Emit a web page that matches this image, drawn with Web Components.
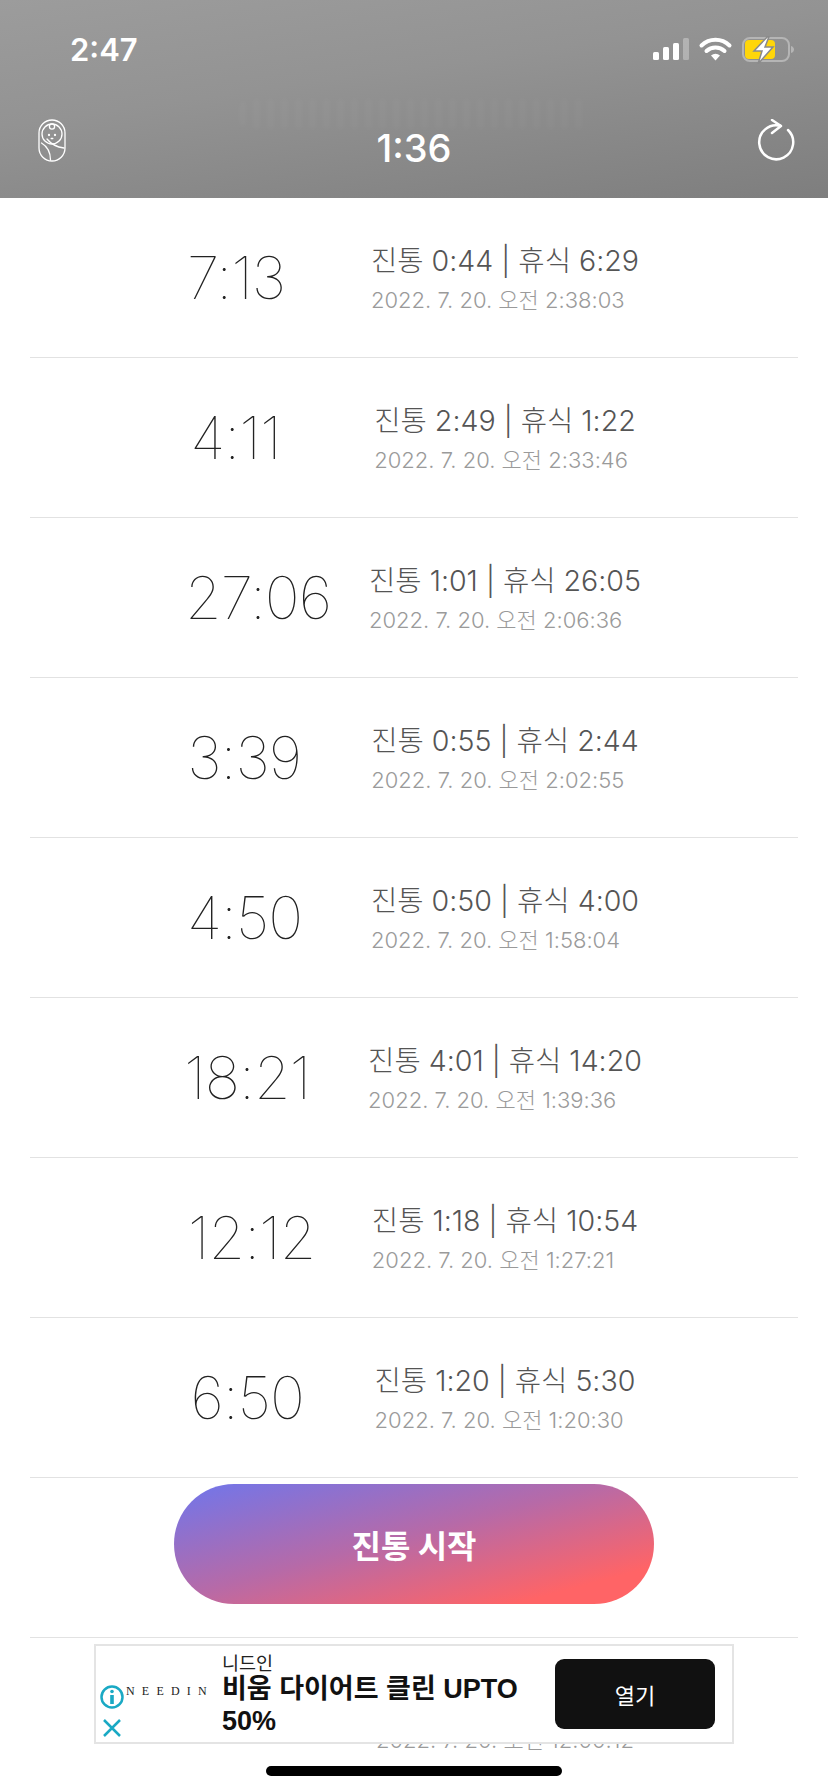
<!DOCTYPE html>
<html>
<head>
<meta charset="utf-8">
<style>
html,body{margin:0;padding:0;background:#fff;}
body{font-family:Inter,"Noto Sans CJK KR",sans-serif;}
</style>
</head>
<body>
<contraction-app>
  <contraction-row total="7:13" pain="진통 0:44 | 휴식 6:29" stamp="2022. 7. 20. 오전 2:38:03"></contraction-row>
  <contraction-row total="4:11" pain="진통 2:49 | 휴식 1:22" stamp="2022. 7. 20. 오전 2:33:46"></contraction-row>
  <contraction-row total="27:06" pain="진통 1:01 | 휴식 26:05" stamp="2022. 7. 20. 오전 2:06:36"></contraction-row>
  <contraction-row total="3:39" pain="진통 0:55 | 휴식 2:44" stamp="2022. 7. 20. 오전 2:02:55"></contraction-row>
  <contraction-row total="4:50" pain="진통 0:50 | 휴식 4:00" stamp="2022. 7. 20. 오전 1:58:04"></contraction-row>
  <contraction-row total="18:21" pain="진통 4:01 | 휴식 14:20" stamp="2022. 7. 20. 오전 1:39:36"></contraction-row>
  <contraction-row total="12:12" pain="진통 1:18 | 휴식 10:54" stamp="2022. 7. 20. 오전 1:27:21"></contraction-row>
  <contraction-row total="6:50" pain="진통 1:20 | 휴식 5:30" stamp="2022. 7. 20. 오전 1:20:30"></contraction-row>
  <contraction-row></contraction-row>
  <contraction-row stamp="2022. 7. 20. 오전 12:00:12"></contraction-row>
</contraction-app>

<script>
const headTemplate = document.createElement('template');
headTemplate.innerHTML = `
<style>
:host{display:block;height:198px;flex:none;color:#fff;position:relative;overflow:hidden;
  background:linear-gradient(172deg,#9c9c9c 0%,#939393 40%,#7e7e7e 100%);}
.status{display:flex;justify-content:space-between;align-items:center;height:36px;padding:32px 34px 0 70px;}
.clock{font:600 31px/36px Inter,sans-serif;}
.nav{display:flex;justify-content:space-between;align-items:flex-start;padding:0 33px 0 38px;margin-top:51px;}
.title{font:500 38px/44px Inter,sans-serif;margin:7px 0 0 5px;}
.ghost{position:absolute;left:240px;top:99px;width:350px;height:30px;border-radius:8px;filter:blur(2.500px);
  background:repeating-linear-gradient(90deg,rgba(255,255,255,.035) 0 5px,transparent 5px 14px);}
svg{display:block;}
</style>
<div class="ghost"></div>
<div class="status">
  <span class="clock">2:47</span>
  <svg width="142" height="28" viewBox="652 36 142 28">
    <rect x="653" y="52" width="6" height="8" rx="1.5" fill="#fff"/>
    <rect x="663" y="47" width="6" height="13" rx="1.5" fill="#fff"/>
    <rect x="673" y="43" width="6" height="17" rx="1.5" fill="#fff"/>
    <rect x="683" y="38" width="6" height="22" rx="1.5" fill="#fff" opacity=".3"/>
    <path d="M701.500 45.500a20 20 0 0 1 28 0M706.500 51a13 13 0 0 1 18 0" fill="none" stroke="#fff" stroke-width="4" stroke-linecap="round"/>
    <path d="M711 55.500a7 7 0 0 1 9 0l-4.500 5z" fill="#fff"/>
    <rect x="743" y="38" width="46" height="23" rx="7" fill="none" stroke="#b5b5b5" stroke-width="2"/>
    <path d="M791 46c2 .5 3 2 3 3.500s-1 3-3 3.500z" fill="#b5b5b5"/>
    <rect x="745" y="40" width="30" height="19" rx="4" fill="#ffd60a"/>
    <path d="M770 34l-16 17h8l-4 13 15-17h-8z" fill="#fff" stroke="#8a8a8a" stroke-width="1.500"/>
  </svg>
</div>
<div class="nav">
  <svg width="28" height="43" viewBox="0 0 28 43" fill="none" stroke="#fff" stroke-width="1.300" stroke-linecap="round">
    <rect x="1" y="1" width="26" height="41" rx="13"/>
    <circle cx="14" cy="15" r="10"/>
    <circle cx="14" cy="7.500" r="2.600"/>
    <path d="M9 20c4 5 9 8 17 9M3.500 24c5 3 9 7 9 17"/>
    <circle cx="11" cy="16" r=".5" fill="#fff"/><circle cx="17" cy="16" r=".5" fill="#fff"/>
    <path d="M13.200 19.500h1.600"/>
  </svg>
  <span class="title">1:36</span>
  <svg width="38" height="44" viewBox="0 0 38 44" fill="none" stroke="#fff" stroke-width="2.500" stroke-linecap="round" stroke-linejoin="round">
    <path d="M31 11A17 17 0 1 1 23.500 6.800"/>
    <path d="M15 1l9 6-9 7"/>
  </svg>
</div>
`;
class AppHead extends HTMLElement{
  constructor(){
    super();
    this.attachShadow({mode:'open'});
    this.shadowRoot.appendChild(headTemplate.content.cloneNode(true));
  }
}
customElements.define('app-head',AppHead);

const rowTemplate = document.createElement('template');
rowTemplate.innerHTML = `
<style>
:host{display:block;height:160px;flex:none;}
.line{display:flex;justify-content:center;align-items:center;height:159px;margin:0 30px;border-bottom:1px solid #e2e2e2;}
.total{width:184px;margin-left:-2px;font:130 59px/70px Inter,sans-serif;letter-spacing:-1px;color:#222;}
.info{padding-top:2px;}
.pain{font:300 28.600px/38px Inter,"Noto Sans CJK KR",sans-serif;color:#555;white-space:nowrap;min-height:38px;}
.stamp{font:300 22px/32px Inter,"Noto Sans CJK KR",sans-serif;color:#9a9a9a;white-space:nowrap;margin-top:4px;min-height:32px;}
</style>
<div class="line">
  <div class="total"></div>
  <div class="info">
    <div class="pain"></div>
    <div class="stamp"></div>
  </div>
</div>
`;
class ContractionRow extends HTMLElement{
  constructor(){
    super();
    this.attachShadow({mode:'open'});
    this.shadowRoot.appendChild(rowTemplate.content.cloneNode(true));
  }
  connectedCallback(){
    const root = this.shadowRoot;
    root.querySelector('.total').textContent = this.getAttribute('total') || '';
    root.querySelector('.pain').textContent = this.getAttribute('pain') || '';
    root.querySelector('.stamp').textContent = this.getAttribute('stamp') || '';
  }
}
customElements.define('contraction-row',ContractionRow);

const startTemplate = document.createElement('template');
startTemplate.innerHTML = `
<style>
:host{display:flex;align-items:center;justify-content:center;width:480px;height:120px;border-radius:60px;
  background:linear-gradient(165deg,#6f76ec 0%,#b66aa8 46%,#ff6466 85%);
  color:#fff;font:700 32px "Noto Sans CJK KR",sans-serif;}
</style>
<slot></slot>
`;
class StartButton extends HTMLElement{
  constructor(){
    super();
    this.attachShadow({mode:'open'});
    this.shadowRoot.appendChild(startTemplate.content.cloneNode(true));
  }
}
customElements.define('start-button',StartButton);

const adTemplate = document.createElement('template');
adTemplate.innerHTML = `
<style>
:host{display:flex;align-items:center;box-sizing:border-box;width:640px;height:100px;background:#fff;border:2px solid #e4e4e4;color:#111;position:relative;}
.marks{position:absolute;left:4px;top:39px;display:block;}
.brand{width:126px;flex:none;box-sizing:border-box;padding:0 0 6px 30px;font:12px "Liberation Serif",serif;letter-spacing:7.200px;white-space:nowrap;overflow:hidden;color:#222;}
.copy{width:333px;flex:none;}
.name{font:400 18.500px/22px "Noto Sans CJK KR",sans-serif;color:#222;}
.head{font:700 27px/32px "Liberation Sans","Noto Sans CJK KR",sans-serif;width:310px;}
.open{width:160px;height:70px;border-radius:9px;background:#111;color:#fff;display:flex;align-items:center;justify-content:center;font:400 22px "Noto Sans CJK KR",sans-serif;}
</style>
<svg class="marks" width="24" height="54" viewBox="0 0 24 54" fill="none" stroke="#1aa9c4">
  <circle cx="12" cy="12" r="10.500" stroke-width="2.500"/>
  <circle cx="12" cy="6.500" r="1.800" fill="#1aa9c4" stroke="none"/>
  <rect x="10.200" y="10" width="3.600" height="9" fill="#1aa9c4" stroke="none"/>
  <path d="M4 35l16 16M20 35L4 51" stroke-width="2.500"/>
</svg>
<div class="brand">NEEDIN</div>
<div class="copy">
  <div class="name">니드인</div>
  <div class="head">비움 다이어트 클린 UPTO 50%</div>
</div>
<div class="open">열기</div>
`;
class AdBanner extends HTMLElement{
  constructor(){
    super();
    this.attachShadow({mode:'open'});
    this.shadowRoot.appendChild(adTemplate.content.cloneNode(true));
  }
}
customElements.define('ad-banner',AdBanner);

const appTemplate = document.createElement('template');
appTemplate.innerHTML = `
<style>
:host{display:flex;flex-direction:column;width:828px;height:1792px;overflow:hidden;position:relative;background:#fff;}
start-button{position:absolute;left:174px;top:1484px;}
ad-banner{position:absolute;left:94px;top:1644px;}
.home{position:absolute;left:266px;top:1766px;width:296px;height:10px;border-radius:5px;background:#000;}
</style>
<app-head></app-head>
<slot></slot>
<start-button>진통 시작</start-button>
<ad-banner></ad-banner>
<div class="home"></div>
`;
class ContractionApp extends HTMLElement{
  constructor(){
    super();
    this.attachShadow({mode:'open'});
    this.shadowRoot.appendChild(appTemplate.content.cloneNode(true));
  }
}
customElements.define('contraction-app',ContractionApp);
</script>
</body>
</html>
